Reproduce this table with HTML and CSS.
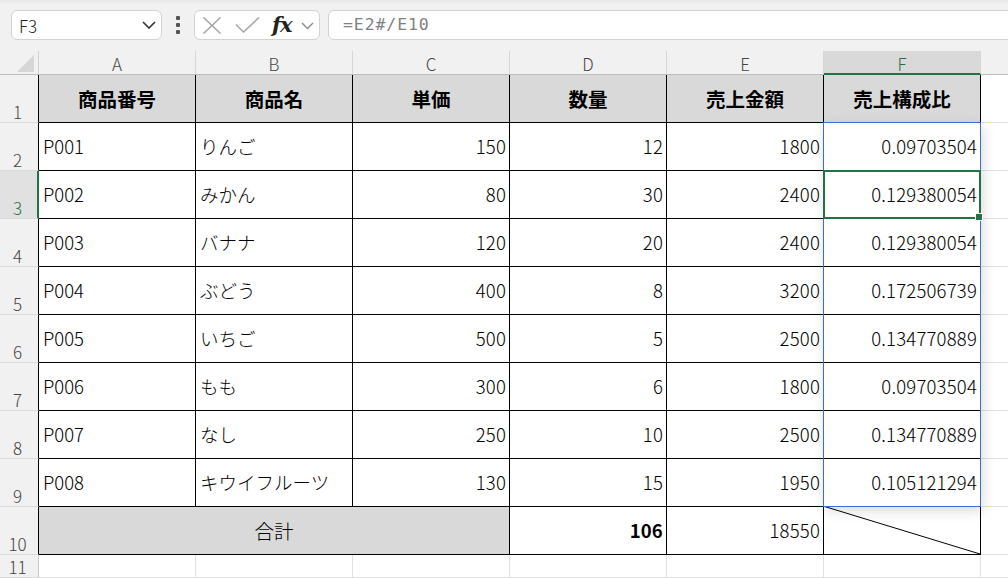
FILE: index.html
```html
<!DOCTYPE html>
<html lang="ja">
<head>
<meta charset="utf-8">
<title>Sheet</title>
<link rel="stylesheet" href="styles.css">
</head>
<body>
<div class="app">
  <div class="formula-bar">
    <div class="name-box">
      <span class="name-text">F3</span>
      <svg class="chev" width="14" height="8" viewBox="0 0 14 8"><path d="M1 1 L7 7 L13 1" fill="none" stroke="#333" stroke-width="1.6"/></svg>
    </div>
    <div class="dots"><span></span><span></span><span></span></div>
    <div class="fx-group">
      <svg class="ic-x" width="20" height="17" viewBox="0 0 20 17"><path d="M1.5 0.5 L18.5 16.5 M18.5 0.5 L1.5 16.5" fill="none" stroke="#a9a9a9" stroke-width="1.6"/></svg>
      <svg class="ic-check" width="25" height="16" viewBox="0 0 25 16"><path d="M1 7.5 L8.5 15 L24 0.5" fill="none" stroke="#a9a9a9" stroke-width="1.6"/></svg>
      <span class="fx">fx</span>
      <svg class="ic-chev" width="13" height="8" viewBox="0 0 13 8"><path d="M1 1 L6.5 6.5 L12 1" fill="none" stroke="#8a8a8a" stroke-width="1.4"/></svg>
    </div>
    <div class="formula-input"><span class="formula-text">=E2#/E10</span></div>
  </div>

  <div class="sheet">
    <div class="corner"><svg width="18" height="18" viewBox="0 0 18 18"><polygon points="17,0 17,17 0,17" fill="#d6d6d6"/></svg></div>
    <div class="ch">A</div>
    <div class="ch">B</div>
    <div class="ch">C</div>
    <div class="ch">D</div>
    <div class="ch">E</div>
    <div class="ch sel">F</div>
    <div class="ch last"></div>

    <div class="rh tb">1</div>
    <div class="c hd">商品番号</div>
    <div class="c hd">商品名</div>
    <div class="c hd">単価</div>
    <div class="c hd">数量</div>
    <div class="c hd">売上金額</div>
    <div class="c hd">売上構成比</div>
    <div class="g"></div>

    <div class="rh tb">2</div>
    <div class="c">P001</div>
    <div class="c">りんご</div>
    <div class="c num">150</div>
    <div class="c num">12</div>
    <div class="c num">1800</div>
    <div class="c num">0.09703504</div>
    <div class="g"></div>

    <div class="rh tb sel">3</div>
    <div class="c">P002</div>
    <div class="c">みかん</div>
    <div class="c num">80</div>
    <div class="c num">30</div>
    <div class="c num">2400</div>
    <div class="c num">0.129380054</div>
    <div class="g"></div>

    <div class="rh tb">4</div>
    <div class="c">P003</div>
    <div class="c">バナナ</div>
    <div class="c num">120</div>
    <div class="c num">20</div>
    <div class="c num">2400</div>
    <div class="c num">0.129380054</div>
    <div class="g"></div>

    <div class="rh tb">5</div>
    <div class="c">P004</div>
    <div class="c">ぶどう</div>
    <div class="c num">400</div>
    <div class="c num">8</div>
    <div class="c num">3200</div>
    <div class="c num">0.172506739</div>
    <div class="g"></div>

    <div class="rh tb">6</div>
    <div class="c">P005</div>
    <div class="c">いちご</div>
    <div class="c num">500</div>
    <div class="c num">5</div>
    <div class="c num">2500</div>
    <div class="c num">0.134770889</div>
    <div class="g"></div>

    <div class="rh tb">7</div>
    <div class="c">P006</div>
    <div class="c">もも</div>
    <div class="c num">300</div>
    <div class="c num">6</div>
    <div class="c num">1800</div>
    <div class="c num">0.09703504</div>
    <div class="g"></div>

    <div class="rh tb">8</div>
    <div class="c">P007</div>
    <div class="c">なし</div>
    <div class="c num">250</div>
    <div class="c num">10</div>
    <div class="c num">2500</div>
    <div class="c num">0.134770889</div>
    <div class="g"></div>

    <div class="rh tb">9</div>
    <div class="c">P008</div>
    <div class="c">キウイフルーツ</div>
    <div class="c num">130</div>
    <div class="c num">15</div>
    <div class="c num">1950</div>
    <div class="c num">0.105121294</div>
    <div class="g"></div>

    <div class="rh tb">10</div>
    <div class="c total">合計</div>
    <div class="c num bold">106</div>
    <div class="c num">18550</div>
    <div class="c diag"><svg class="diag-line" viewBox="0 0 100 100" preserveAspectRatio="none"><line x1="0" y1="0" x2="100" y2="100" stroke="#000" stroke-width="1" vector-effect="non-scaling-stroke"/></svg></div>
    <div class="g"></div>

    <div class="rh last-row">11</div>
    <div class="e"></div>
    <div class="e"></div>
    <div class="e"></div>
    <div class="e"></div>
    <div class="e"></div>
    <div class="e"></div>
    <div class="g"></div>

    <div class="spill"></div>
    <div class="active"><span class="handle"></span></div>
  </div>
</div>
</body>
</html>
```

FILE: styles.css
```css
html, body {
  margin: 0;
  padding: 0;
  width: 1008px;
  height: 578px;
  overflow: hidden;
  background: #ffffff;
}

.app {
  width: 1008px;
  height: 578px;
  overflow: hidden;
  font-family: "Noto Sans CJK JP", "Noto Sans", sans-serif;
  color: #000;
}

/* ---------- formula bar ---------- */
.formula-bar {
  height: 51px;
  box-sizing: border-box;
  padding-top: 10px;
  background: linear-gradient(#e6e6e6 0px, #f1f1f1 4px, #f1f1f1 100%);
  display: flex;
  align-items: flex-start;
}

.name-box {
  margin-left: 11px;
  width: 151px;
  height: 30px;
  box-sizing: border-box;
  border: 1px solid #d2d2d2;
  border-radius: 6px;
  background: #fff;
  display: flex;
  align-items: center;
  justify-content: space-between;
  padding: 0 5px 0 7px;
}

.name-text {
  font-family: "Noto Sans CJK JP", "Noto Sans", sans-serif;
  font-weight: 300;
  font-size: 17px;
  line-height: 1;
  color: #222;
}

.chev { display: block; }

.dots {
  width: 32px;
  height: 30px;
  display: flex;
  flex-direction: column;
  align-items: center;
  justify-content: center;
  gap: 3px;
}

.dots span {
  width: 4px;
  height: 4px;
  background: #555;
  border-radius: 1px;
}

.fx-group {
  width: 126px;
  height: 30px;
  box-sizing: border-box;
  border: 1px solid #d2d2d2;
  border-radius: 6px;
  background: #fff;
  display: flex;
  align-items: center;
  padding-left: 7px;
}

.ic-x { display: block; }
.ic-check { display: block; margin-left: 13px; }

.fx {
  font-family: "DejaVu Serif", "Liberation Serif", serif;
  font-style: italic;
  font-weight: bold;
  font-size: 21px;
  line-height: 1;
  color: #222;
  margin-left: 12px;
  margin-top: -1px;
  letter-spacing: -1px;
}

.ic-chev { display: block; margin-left: 9px; margin-top: 1px; }

.formula-input {
  margin-left: 8px;
  flex: 1;
  margin-right: -12px;
  height: 30px;
  box-sizing: border-box;
  border: 1px solid #d2d2d2;
  border-radius: 6px;
  background: #fff;
  display: flex;
  align-items: center;
  padding-left: 14px;
}

.formula-text {
  font-family: "DejaVu Sans Mono", "Liberation Mono", monospace;
  font-size: 16.5px;
  letter-spacing: 0.9px;
  color: #808080;
  line-height: 1;
}

/* ---------- sheet grid ---------- */
.sheet {
  position: relative;
  display: grid;
  grid-template-columns: 39px repeat(6, 157px) 1fr;
  grid-template-rows: 24px repeat(10, 48px) 23px;
  background: #fff;
}

.sheet > div {
  box-sizing: border-box;
  min-width: 0;
}

.corner {
  background: #f1f1f1;
  border-right: 1px solid #d0d0d0;
  border-bottom: 1px solid #bdbdbd;
  display: flex;
  justify-content: flex-end;
  align-items: flex-end;
  padding: 0 3px 1px 0;
}

.corner svg { display: block; }

.ch {
  background: #f1f1f1;
  border-right: 1px solid #d6d6d6;
  border-bottom: 1px solid #bdbdbd;
  display: flex;
  align-items: center;
  justify-content: center;
  font-size: 17px;
  font-weight: 300;
  line-height: 1;
  color: #444;
  padding-top: 1px;
}

.ch.last { border-right: none; }

.ch.sel {
  background: #d9d9d9;
  color: #217346;
  border-bottom: 2px solid #217346;
  padding-top: 2px;
}

.rh {
  background: #f1f1f1;
  border-right: 1px solid #c8c8c8;
  border-bottom: 1px solid #dadada;
  display: flex;
  align-items: flex-end;
  justify-content: center;
  padding: 0 3px 2px 0;
  font-size: 17px;
  font-weight: 300;
  line-height: 1;
  color: #444;
}

.rh.last-row {
  align-items: center;
  padding-bottom: 0;
}

.rh.tb { border-right-color: #000; }

.rh.sel {
  background: #e1e1e1;
  color: #217346;
  border-right: 2px solid #217346;
  padding-right: 2px;
}

.c {
  border-right: 1px solid #000;
  border-bottom: 1px solid #000;
  display: flex;
  align-items: center;
  padding: 0 3px 0 4px;
  font-size: 18.5px;
  font-weight: 300;
  line-height: 1;
  white-space: nowrap;
  overflow: hidden;
  position: relative;
}

.c.hd {
  background: #d9d9d9;
  justify-content: center;
  font-weight: bold;
  font-size: 19.5px;
  padding: 0;
}

.c.num {
  justify-content: flex-end;
  letter-spacing: 0.2px;
}

.c.bold { font-weight: bold; }

.c.total {
  grid-column: span 3;
  background: #d9d9d9;
  justify-content: center;
  font-size: 19.5px;
  padding: 0;
}

.c.diag { padding: 0; overflow: visible; }

.diag-line {
  position: absolute;
  left: -1px;
  top: -1px;
  width: calc(100% + 1px);
  height: calc(100% + 1px);
  overflow: visible;
}

.e {
  border-right: 1px solid #e1e1e1;
  border-bottom: 1px solid #e1e1e1;
}

.g {
  border-bottom: 1px solid #e1e1e1;
}

/* ---------- overlays ---------- */
.spill {
  position: absolute;
  grid-column: 7 / 8;
  grid-row: 3 / 11;
  top: -1px;
  left: -1px;
  right: 0;
  bottom: 0;
  border: 1px solid #3571d4;
  box-shadow: 2px 4px 12px rgba(0, 0, 0, 0.14);
  pointer-events: none;
  z-index: 2;
}

.active {
  position: absolute;
  grid-column: 7 / 8;
  grid-row: 4 / 5;
  top: -1px;
  left: -1px;
  right: 0;
  bottom: 0;
  border: 2px solid #217346;
  z-index: 3;
}

.handle {
  position: absolute;
  right: -4px;
  bottom: -4px;
  width: 6px;
  height: 6px;
  background: #217346;
  border: 1px solid #fff;
}
```
